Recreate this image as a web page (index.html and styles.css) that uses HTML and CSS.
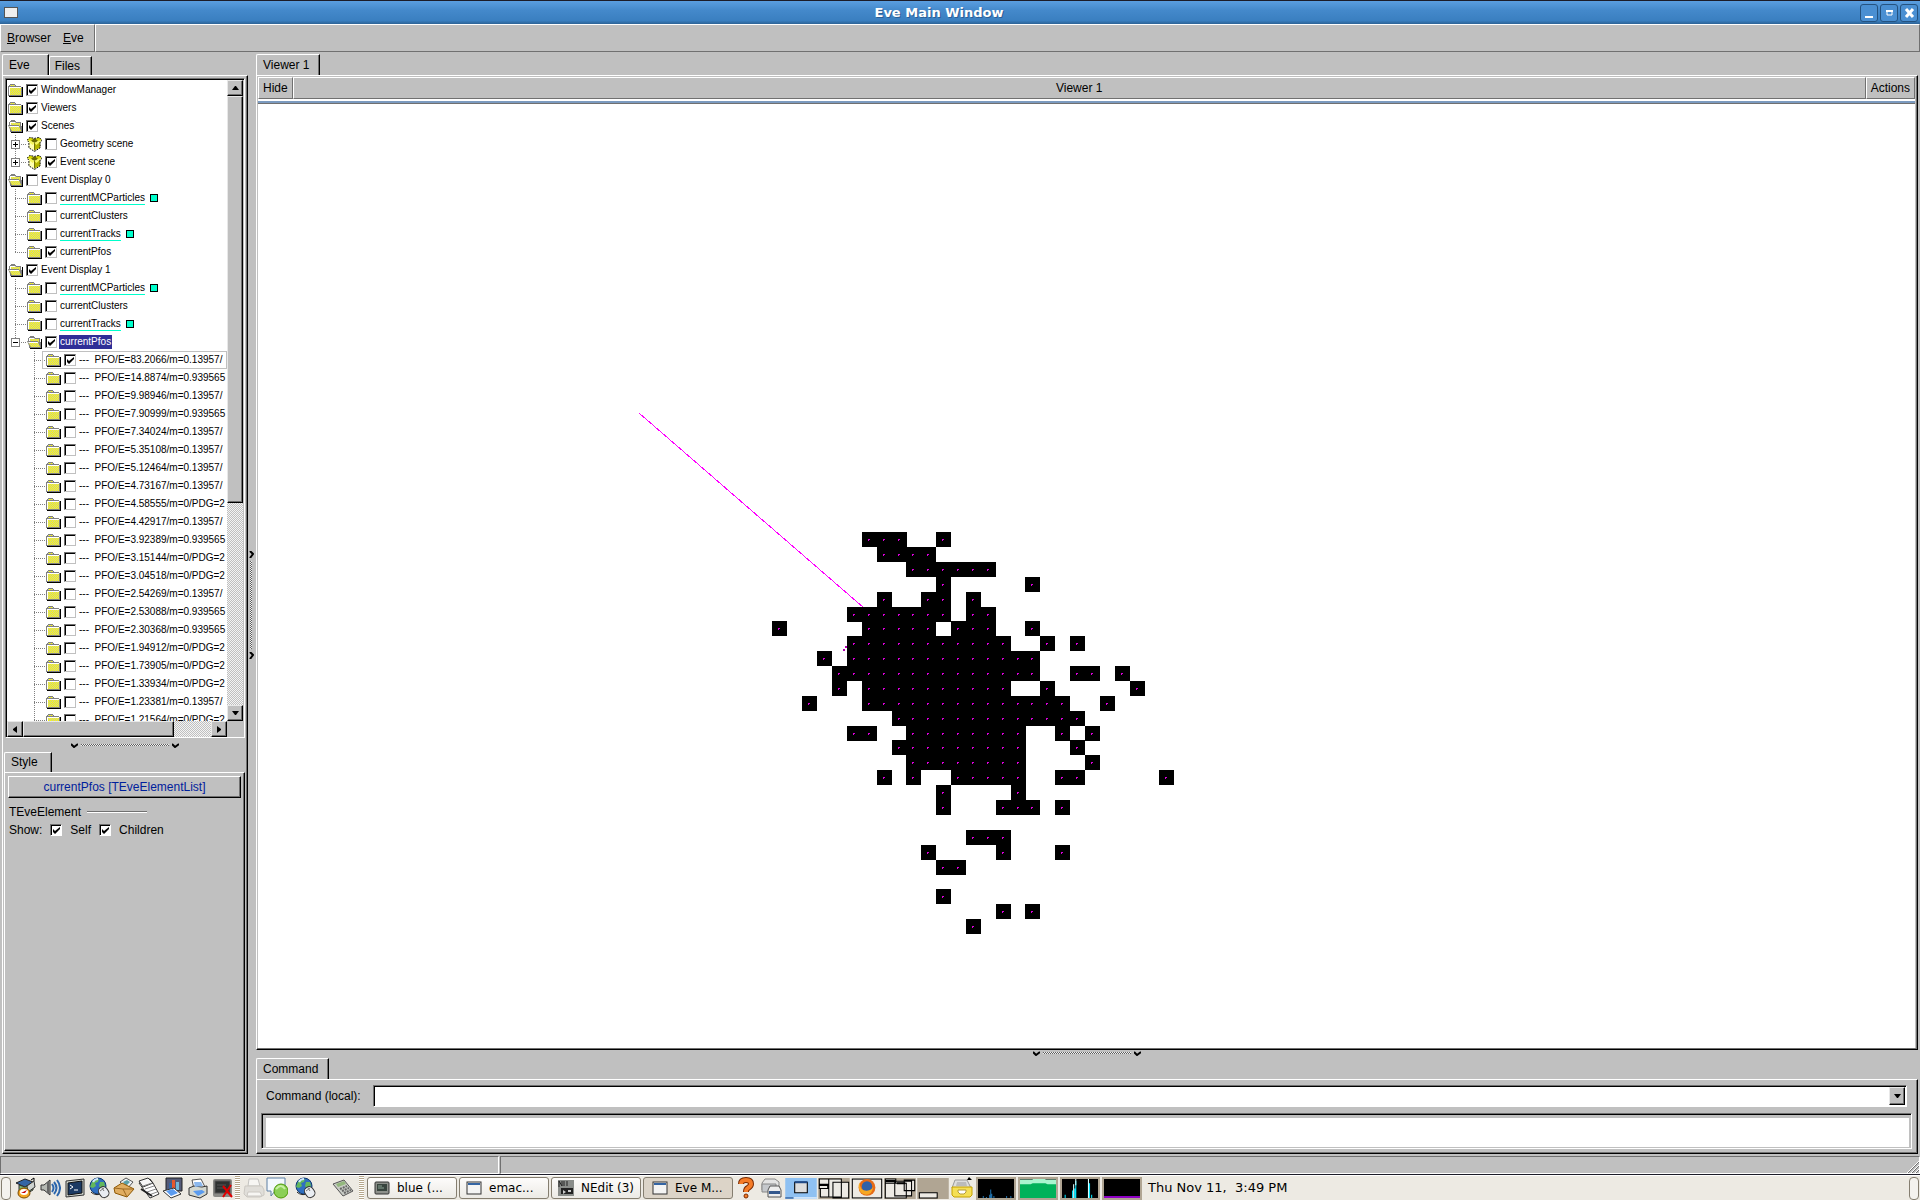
FILE: index.html
```html
<!DOCTYPE html>
<html lang="en">
<head>
  <meta charset="UTF-8">
  <meta name="viewport" content="width=device-width, initial-scale=1.0">
  <title>Eve Main Window</title>
  <link rel="stylesheet" href="styles.css">
</head>
<body>

  <!-- shared tree icons -->
  <svg class="defs" width="0" height="0" aria-hidden="true">
    <defs>
      <pattern id="dither" width="2" height="2" patternUnits="userSpaceOnUse">
        <rect width="2" height="2" fill="#ffff00"/>
        <rect width="1" height="1" fill="#c8c8a0"/>
        <rect x="1" y="1" width="1" height="1" fill="#c8c8a0"/>
      </pattern>
      <symbol id="folder" viewBox="0 0 15 14">
        <path d="M0 3h1V2h1V1h5v1h1v1h5v1h1v9H0z" fill="#808080"/>
        <path d="M1 4h12v8H1z" fill="url(#dither)"/>
        <path d="M2 2h5v1H2z" fill="url(#dither)"/>
        <path d="M1 4h12v1H2v7H1z" fill="#fff"/>
        <path d="M14 4h1v10H1v-1h13z" fill="#000"/>
      </symbol>
      <symbol id="folder-open" viewBox="0 0 15 14">
        <path d="M1 3h1V2h1V1h4v1h1v1h5v4h1v6H2V7H1z" fill="#808080"/>
        <path d="M2 3h5l1 1h4v3H2z" fill="#fff"/>
        <path d="M3 4h9v3H3z" fill="url(#dither)"/>
        <path d="M0 6h11l3 7H3z" fill="#808080"/>
        <path d="M1 7h10l2 5H4z" fill="url(#dither)"/>
        <path d="M1 7h10v1H2z" fill="#fff"/>
        <path d="M14 4h1v10H3v-1h11z" fill="#000"/>
      </symbol>
      <symbol id="box" viewBox="0 0 16 16">
        <path d="M2 5l6 2v8l-6-3z" fill="#ffffb0"/>
        <path d="M8 7l6-2v7l-6 3z" fill="#b4b400"/>
        <path d="M2 4l6-2 6 2-6 3z" fill="#6b6b00"/>
        <path d="M0 4l3-3 4 1-3 3zM16 4l-3-3-4 1 3 3z" fill="#d8d800"/>
        <path d="M1 5l2-1 5 3-2 2zM15 5l-2-1-5 3 2 2z" fill="#f4f460"/>
        <path d="M0 4l3-3 5 1 5-1 3 3-2 2v6l-6 4-6-4V6z" fill="none" stroke="#000" stroke-dasharray="2 1"/>
        <path d="M8 7v8" stroke="#6b6b00"/>
      </symbol>
      <symbol id="globe" viewBox="0 0 22 22">
        <circle cx="10" cy="9" r="8" fill="#2f6fc0" stroke="#123a70"/>
        <path d="M4 5c2-3 5-3 7-3l-1 3-3 1 1 3-3 2-3-1zM12 5l4 0 1 4-4 3-2-3z" fill="#62b85c"/>
        <path d="M5 5c1-2 3-3 5-3" stroke="#cfe6ff" stroke-width="2" fill="none"/>
        <path d="M3 15c3 3 7 3 9 2" stroke="#222" fill="none"/>
        <rect x="11" y="10" width="9" height="11" rx="4" transform="rotate(-35 15 15)" fill="#e9edf2" stroke="#333"/>
        <path d="M12 14l4-3M14 11l2 3" stroke="#777"/>
      </symbol>
      <symbol id="window" viewBox="0 0 16 14">
        <rect x="1" y="1" width="14" height="12" fill="#f4f4f4" stroke="#333"/>
        <rect x="2" y="2" width="12" height="2" fill="#3465a4"/>
      </symbol>
    </defs>
  </svg>

  <div class="desktop">

    <header class="titlebar">
      <span class="window-icon"></span>
      <h1>Eve Main Window</h1>
      <div class="window-buttons">
        <button aria-label="Minimize"><svg width="16" height="16"><path d="M4 11h8v2H4z" fill="#fff"/></svg></button>
        <button aria-label="Maximize"><svg width="16" height="16"><path d="M6 6h5v4H6z" fill="none" stroke="#fff"/><path d="M5 5h7v2H5z" fill="#fff"/></svg></button>
        <button aria-label="Close"><svg width="16" height="16"><path d="M5 4l7 8M12 4l-7 8" stroke="#fff" stroke-width="3"/></svg></button>
      </div>
    </header>

    <nav class="menubar">
      <div class="menus">
        <button><u>B</u>rowser</button>
        <button><u>E</u>ve</button>
      </div>
      <div class="menu-rest"></div>
    </nav>

    <main class="workspace">

      <section class="sidebar">
        <div class="tabs">
          <button class="tab active">Eve</button>
          <button class="tab">Files</button>
        </div>
        <div class="side-body raised">
          <div class="tree-frame sunken">
            <ul class="tree" id="tree"></ul>
            <div class="scroll-v">
              <button class="scroll-btn" aria-label="Scroll up"><svg width="7" height="4"><path d="M0 4h7L4 0H3z"/></svg></button>
              <div class="thumb"></div>
              <div class="trough"></div>
              <button class="scroll-btn" aria-label="Scroll down"><svg width="7" height="4"><path d="M0 0h7L4 4H3z"/></svg></button>
            </div>
            <div class="scroll-h">
              <button class="scroll-btn" aria-label="Scroll left"><svg width="4" height="7"><path d="M4 0v7L0 4V3z"/></svg></button>
              <div class="thumb"></div>
              <div class="trough"></div>
              <button class="scroll-btn" aria-label="Scroll right"><svg width="4" height="7"><path d="M0 0v7l4-3V3z"/></svg></button>
            </div>
          </div>

          <div class="splitter"><svg width="7" height="5"><path d="M0 1l3 3 4-3"/></svg><i></i><svg width="7" height="5"><path d="M0 1l3 3 4-3"/></svg></div>

          <div class="style-pane">
            <div class="tabs">
              <button class="tab active">Style</button>
            </div>
            <div class="style-body raised">
              <button class="object-btn raised">currentPfos [TEveElementList]</button>
              <div class="group-title">TEveElement <hr></div>
              <div class="show-row">
                <span>Show:</span>
                <label><input type="checkbox" checked>Self</label>
                <label><input type="checkbox" checked>Children</label>
              </div>
            </div>
          </div>
        </div>
      </section>

      <div class="splitter vertical"><svg width="5" height="7"><path d="M1 0l3 3-3 4"/></svg><i></i><svg width="5" height="7"><path d="M1 0l3 3-3 4"/></svg></div>

      <section class="content">
        <div class="tabs">
          <button class="tab active">Viewer 1</button>
        </div>
        <div class="viewer raised">
          <div class="viewer-bar">
            <button>Hide</button>
            <button class="viewer-title">Viewer 1</button>
            <button>Actions</button>
          </div>
          <div class="viewer-stripe"></div>
          <svg class="canvas" id="canvas" role="img" aria-label="Event display"></svg>
        </div>

        <div class="splitter"><svg width="7" height="5"><path d="M0 1l3 3 4-3"/></svg><i></i><svg width="7" height="5"><path d="M0 1l3 3 4-3"/></svg></div>

        <div class="tabs">
          <button class="tab active">Command</button>
        </div>
        <div class="command raised">
          <div class="command-row">
            <label for="command">Command (local):</label>
            <div class="combo sunken">
              <input type="text" id="command">
              <button class="scroll-btn" aria-label="Command history"><svg width="7" height="4"><path d="M0 0h7L4 4H3z"/></svg></button>
            </div>
          </div>
          <div class="output sunken"><textarea aria-label="Command output" readonly></textarea></div>
        </div>
      </section>
    </main>

    <div class="statusbar">
      <div></div>
      <div>
        <svg width="12" height="12"><path d="M0 12L12 0M4 12l8-8M8 12l4-4" stroke="#fff"/><path d="M1 12L12 1M5 12l7-7M9 12l3-3" stroke="#707070"/></svg>
      </div>
    </div>

    <footer class="taskbar">
      <button class="hide-btn" aria-label="Hide panel"></button>
      <div class="launchers">
        <svg class="icon" viewBox="0 0 22 22">
          <path d="M2 6l9-4 8 3-8 5z" fill="#3465a4" stroke="#222"/><path d="M5 8l6 2 8-4v7l-7 4-7-3z" fill="#7fb56c" stroke="#333"/><path d="M13 9l7-5 1 6-7 5z" fill="#cfd3d0" stroke="#333"/><path d="M17 3l3-2v3" fill="none" stroke="#000"/>
          <ellipse cx="10" cy="16" rx="6" ry="5" fill="#f5a623" stroke="#7a4a00"/><ellipse cx="10" cy="15" rx="4" ry="3" fill="#fff"/><path d="M7 16l6-3-2 3z" fill="#c00"/>
        </svg>
        <svg class="icon" viewBox="0 0 22 22">
          <path d="M2 8h3l6-5v15l-6-5H2z" fill="#b5b8b2" stroke="#333"/><path d="M9 5v11" stroke="#666" stroke-width="2"/>
          <path d="M13 7q3 4 0 8M15 5q5 6 0 12M18 3q6 8 0 16" fill="none" stroke="#2c66ad" stroke-width="2"/>
        </svg>
        <svg class="icon" viewBox="0 0 22 22">
          <path d="M2 4l18-2v16L2 20z" fill="#d3d7cf" stroke="#333"/><path d="M4 6l14-2v12L4 18z" fill="#1c3a63" stroke="#111"/><path d="M6 8l3 2-3 2M10 13h4" fill="none" stroke="#fff"/>
        </svg>
        <svg class="icon" viewBox="0 0 22 22"><use href="#globe"/></svg>
        <svg class="icon" viewBox="0 0 22 22">
          <path d="M7 5l6-4 7 4-6 7z" fill="#eef3f7" stroke="#555"/><path d="M10 5l4-2 3 2-4 4z" fill="#5ba0a8"/><path d="M1 11l8-5 12 6-7 8-12-4z" fill="#e0ad60" stroke="#8f5902"/><path d="M1 11l9 1 11 0M10 12l4 8" fill="none" stroke="#9c6820"/>
        </svg>
        <svg class="icon" viewBox="0 0 22 22">
          <path d="M1 6l11-4 3 4 6 11-9 4z" fill="#fff" stroke="#333"/><path d="M1 4l9-3 5 5-10 4z" fill="#f7f7f7" stroke="#333"/><path d="M5 9l9-3M7 12l9-3M9 15l9-3M11 18l8-3" stroke="#888"/><path d="M3 12l11 7" stroke="#222" stroke-width="2"/>
        </svg>
        <svg class="icon" viewBox="0 0 22 22">
          <path d="M4 1h16v13H4z" fill="#555b78" stroke="#222"/><path d="M7 6h3v7H7z" fill="#3465a4"/><path d="M10 3h3v10h-3z" fill="#e8582c"/><path d="M14 5h3v8h-3z" fill="#73b6d8"/><path d="M1 14l11-3 7 6-10 4z" fill="#fff" stroke="#333"/><path d="M4 14l7-2 5 4-7 3z" fill="#5a9bef"/>
        </svg>
        <svg class="icon" viewBox="0 0 22 22">
          <path d="M5 3l9-1 4 8-11 2z" fill="#fff" stroke="#555"/><path d="M2 11l5-2 8 1 5-1v8l-7 4-11-3z" fill="#d3d7cf" stroke="#333"/><path d="M6 14l9-1 3 2-7 4z" fill="#5a9bef"/><path d="M7 5l7 0 2 4-8 1z" fill="#8bb8ee"/>
        </svg>
        <svg class="icon" viewBox="0 0 22 22">
          <rect x="1" y="2" width="19" height="18" rx="2" fill="#8a8a86"/><rect x="3" y="4" width="15" height="12" fill="#2e3130" stroke="#555"/><path d="M5 8h9M5 11h9" stroke="#555"/><path d="M11 9l9 11M19 8l-8 12" stroke="#e00000" stroke-width="2"/>
        </svg>
      </div>
      <span class="grip"></span>
      <div class="applets">
        <svg class="icon" viewBox="0 0 22 22" opacity=".6">
          <path d="M6 2h9l2 7H5z" fill="#fff" stroke="#aaa"/><path d="M2 9h17l2 4v5l-4 2H4l-3-3z" fill="#d9d7d3" stroke="#b5b2ad"/><path d="M5 15h12l2 4H4z" fill="#fff" stroke="#b5b2ad"/>
        </svg>
        <svg class="icon" viewBox="0 0 22 22">
          <path d="M1 1h18v13H9l-4 5v-5H1z" fill="#f3f8fd" stroke="#5c7fa3"/><circle cx="15" cy="14" r="7" fill="#8bcf56" stroke="#4e9a06"/><path d="M10 12q5-6 9 0" fill="none" stroke="#c7efa4" stroke-width="2"/>
        </svg>
        <svg class="icon" viewBox="0 0 22 22"><use href="#globe"/></svg>
        <svg class="icon calc" viewBox="0 0 22 22">
          <path d="M1 7l11-4 9 11-10 5z" fill="#c9ccc6" stroke="#555"/><path d="M4 7l8-3 2 3-8 3z" fill="#93b77d"/><path d="M8 12l7-3M10 14l7-3M12 16l7-3" stroke="#666" stroke-width="2" stroke-dasharray="2 1"/>
        </svg>
      </div>
      <span class="grip"></span>
      <div class="tasks">
        <button class="task"><svg width="16" height="14" viewBox="0 0 16 14"><rect x="1" y="1" width="14" height="12" rx="1" fill="#8d908b" stroke="#333"/><rect x="3" y="3" width="10" height="7" fill="#38443e"/><path d="M4 5h4M4 7h6" stroke="#8aa394"/></svg>blue (...</button>
        <button class="task"><svg width="16" height="14"><use href="#window"/></svg>emac...</button>
        <button class="task"><svg width="16" height="16" viewBox="0 0 16 16"><rect width="16" height="16" fill="#8a8d8a"/><path d="M1 7V1l3 5V1M6 1v5M9 1v5" fill="none" stroke="#222"/><path d="M3 8h12v6H3z" fill="#222"/><path d="M5 10l3 2-3 2M10 10h3v2h-3z" fill="#ccc"/></svg>NEdit (3)</button>
        <button class="task pressed"><svg width="16" height="14"><use href="#window"/></svg>Eve M...</button>
      </div>
      <svg class="icon" viewBox="0 0 22 22"><path d="M6 7q0-4 5-4t5 4q0 2-3 4-2 1-2 4" fill="none" stroke="#7a2a00" stroke-width="6"/><path d="M6 7q0-4 5-4t5 4q0 2-3 4-2 1-2 4" fill="none" stroke="#f57c28" stroke-width="4"/><circle cx="11" cy="19" r="2" fill="#f57c28" stroke="#7a2a00"/></svg>
      <svg class="icon" viewBox="0 0 22 22"><path d="M5 2h10l4 3v8H2V6z" fill="#e4e4e4" stroke="#888"/><path d="M2 7h14v8H2z" fill="#c5c8cc" stroke="#888"/><path d="M10 9h9l2 4v7H8v-7z" fill="#eee" stroke="#555"/><path d="M9 14h11v3H9z" fill="#34588c"/></svg>
      <div class="pager">
        <svg viewBox="0 0 30 20"><rect width="30" height="20" fill="#8fc1f2"/><path d="M9 4h12v10H9z" fill="#ddd" stroke="#000"/><path d="M9 4h12" stroke="#204a87" stroke-width="2"/><path d="M0 19h8" stroke="#204a87"/><path d="M8 19h22" stroke="#fff"/></svg>
        <svg viewBox="0 0 30 20"><rect width="30" height="20" fill="#b0a593"/><g fill="#edeae4" stroke="#000"><path d="M1 1h9v5H1zM1 7h8v3H1zM2 10h8v8H2zM10 1h12v17H10zM14 4h15v15H14z"/></g></svg>
        <svg viewBox="0 0 30 20"><rect x="1" y="1" width="28" height="18" fill="#edeae4" stroke="#000"/><circle cx="15" cy="9" r="8" fill="#e66b17"/><circle cx="15" cy="8" r="5" fill="#3061a8"/><path d="M8 4q0 9 8 8 4-1 5-4-1 8-7 8-7-1-7-9z" fill="#f7a823"/></svg>
        <svg viewBox="0 0 30 20"><rect width="30" height="20" fill="#b0a593"/><g fill="#edeae4" stroke="#000"><path d="M1 1h10v4H1zM19 2h10v10H19zM10 3h16v14H10zM1 5h20v14H1z"/></g><path d="M1 3h10M12 5h8" stroke="#000" stroke-width="2"/></svg>
        <svg viewBox="0 0 30 20"><rect width="30" height="20" fill="#b0a593"/><path d="M2 14h17v5H2z" fill="#edeae4" stroke="#000"/></svg>
      </div>
      <svg class="icon drawer" viewBox="0 0 22 22"><path d="M4 3h12l4 8H1z" fill="#ddd" stroke="#999"/><path d="M6 5h9l1 4H5z" fill="#bbb"/><path d="M1 10h20v8l-2 2H3l-2-2z" fill="#f5df55" stroke="#c4a000"/><path d="M7 13h8v2l-2 2H9l-2-2z" fill="#fff" stroke="#b39b3a"/><path d="M16 3l2-3 3 3z" fill="#000"/></svg>
      <div class="monitors">
        <svg viewBox="0 0 34 18" preserveAspectRatio="none"><rect width="34" height="18"/><path d="M5 18v-2M8 18v-1M11 18v-3M12 18v-8M13 18v-4M15 18v-2M27 18v-2M31 18v-2" stroke="#1f6ea8"/></svg>
        <svg viewBox="0 0 34 18" preserveAspectRatio="none"><rect width="34" height="18" fill="#a8f5cf"/><path d="M0 5h10l2-1h12l2 1h8v13H0z" fill="#00b25a"/><path d="M0 0h12M24 0h10" stroke="#000"/></svg>
        <svg viewBox="0 0 34 18" preserveAspectRatio="none"><rect width="34" height="18"/><path d="M3 18v-3M10 18v-7M12 18V9M13 18V2M26 18V4M28 18v-3" stroke="#00e5ff"/><path d="M11 18V5M25 18V0M13 6V0" stroke="#e0ffff"/></svg>
        <svg viewBox="0 0 34 18" preserveAspectRatio="none"><rect width="34" height="18"/><path d="M0 16h34v2H0z" fill="#8f00c4"/></svg>
      </div>
      <time class="clock">Thu Nov 11, &nbsp;3:49 PM</time>
      <button class="hide-btn end" aria-label="Hide panel"></button>
    </footer>
  </div>

  <script src="script.js"></script>
</body>
</html>
```

FILE: styles.css
```css
* {
  box-sizing: border-box;
}
html, body {
  height: 100%;
}
body {
  margin: 0;
  overflow: hidden;
  background-color: #c0c0c0;
  color: #000;
  font-family: "Liberation Sans", Arial, sans-serif;
  font-size: 12px;
  line-height: 14px;
}
button {
  margin: 0;
  padding: 0;
  border: none;
  background-color: #c0c0c0;
  color: inherit;
  font: inherit;
}
svg {
  display: block;
  flex: none;
}
.defs {
  position: absolute;
}
.desktop {
  display: flex;
  flex-direction: column;
  height: 100vh;
}

/* bevels */
.raised {
  border: 1px solid;
  border-color: #fff #000 #000 #fff;
  box-shadow: inset -1px -1px #707070;
}
.sunken {
  border: 1px solid;
  border-color: #707070 #fff #fff #707070;
  box-shadow: inset 1px 1px #000;
}

/* title bar */
.titlebar {
  display: flex;
  align-items: center;
  height: 24px;
  padding: 0 2px 0 4px;
  border-top: 1px solid #1c1c28;
  background: linear-gradient(#5a9ee0, #4489cb 40%, #3a7fc0 85%, #2d6396);
}
.titlebar h1 {
  flex: 1;
  margin: 0;
  text-align: center;
  color: #fff;
  font: bold 13px/20px "DejaVu Sans", sans-serif;
  text-shadow: 1px 1px #2c5f95;
}
.window-icon {
  width: 14px;
  height: 11px;
  border: 1px solid #555;
  background-color: #eee;
}
.window-buttons {
  display: flex;
  gap: 2px;
}
.window-buttons button {
  width: 18px;
  height: 18px;
  border: 1px solid #24527f;
  border-radius: 3px;
  background-color: #4a8fd2;
}

/* menu bar */
.menubar {
  display: flex;
  height: 28px;
}
.menus, .menu-rest {
  border: 1px solid;
  border-color: #fff #707070 #707070 #fff;
}
.menus {
  display: flex;
  gap: 12px;
  width: 95px;
  padding-left: 6px;
}
.menu-rest {
  flex: 1;
}

/* layout */
.workspace {
  display: grid;
  grid-template-columns: 246px 8px minmax(0, 1fr);
  flex: 1;
  min-height: 0;
  padding: 0 2px 2px 2px;
}
.sidebar, .content {
  display: flex;
  flex-direction: column;
  min-height: 0;
}
.tabs {
  display: flex;
  align-items: flex-end;
  flex: none;
  height: 23px;
  padding-top: 2px;
}
.tab {
  height: 19px;
  padding: 0 11px 0 5px;
  border: 1px solid;
  border-color: #fff #000 transparent #fff;
  border-bottom: none;
  border-radius: 2px 0 0 0;
  box-shadow: inset -1px 0 #707070;
}
.tab.active {
  height: 22px;
  margin-bottom: -1px;
  padding-bottom: 2px;
  padding-left: 6px;
  padding-right: 10px;
}
.sidebar > .tabs .active {
  padding-right: 18px;
}

/* sidebar */
.side-body {
  display: grid;
  grid-template-rows: minmax(0, 660fr) 14px minmax(0, 399fr);
  flex: 1;
  min-height: 0;
  padding: 2px 2px 2px 1px;
}
.tree-frame {
  display: grid;
  grid-template-columns: minmax(0, 1fr) 16px;
  grid-template-rows: minmax(0, 1fr) 16px;
  margin-left: 1px;
  padding: 1px 1px 0 1px;
}
.tree {
  margin: 0;
  padding: 1px 0 0 0;
  overflow: hidden;
  list-style: none;
  background-color: #fff;
  font-size: 10px;
}
.tree li {
  display: flex;
  align-items: center;
  height: 18px;
  padding-left: 1px;
  white-space: nowrap;
}
.tree label {
  display: flex;
  align-items: center;
  gap: 3px;
  margin-left: 3px;
}
.guide {
  display: flex;
  flex: none;
  align-items: center;
  width: 19px;
  height: 18px;
  padding-left: 3px;
}
.guide.line, .guide.end {
  background:
    repeating-linear-gradient(90deg, #808080 0 1px, transparent 1px 2px) 7px 9px / 11px 1px no-repeat,
    repeating-linear-gradient(#808080 0 1px, transparent 1px 2px) 7px 0 / 1px 18px no-repeat;
}
.guide.end {
  background-size: 11px 1px, 1px 9px;
}
.expander {
  width: 9px;
  height: 9px;
  border: 1px solid #808080;
  background:
    linear-gradient(#000, #000) center / 5px 1px no-repeat,
    linear-gradient(#000, #000) center / 1px 5px no-repeat,
    #fff;
}
.expander.open {
  background: linear-gradient(#000, #000) center / 5px 1px no-repeat #fff;
}
.linked {
  border-bottom: 1px solid #00ffcc;
  line-height: 13px;
}
.swatch {
  width: 8px;
  height: 8px;
  margin-left: 5px;
  border: 1px solid #000;
  background-color: #00ffcc;
}
.selected {
  margin-left: -1px;
  padding: 0 1px;
  background-color: #2f2f97;
  color: #fff;
}
.focus {
  flex: 1;
  display: flex;
  align-items: center;
  min-width: 0;
  height: 18px;
  margin-left: -4px;
  padding-left: 3px;
  border: 1px solid #c0c0c0;
}
input[type="checkbox"] {
  appearance: none;
  flex: none;
  width: 12px;
  height: 12px;
  margin: 0;
  border: 1px solid;
  border-color: #707070 #c0c0c0 #c0c0c0 #707070;
  background-color: #fff;
  box-shadow: inset 1px 1px #000;
}
input[type="checkbox"]:checked {
  background-image: url("data:image/svg+xml,%3Csvg xmlns='http://www.w3.org/2000/svg' width='10' height='10'%3E%3Cpath d='M2 4v3l2 2 5-5V2L4 6z'/%3E%3C/svg%3E");
}

/* scroll bars */
.scroll-v, .scroll-h {
  display: flex;
}
.scroll-v {
  flex-direction: column;
}
.scroll-btn, .thumb {
  border: 1px solid;
  border-color: #e8e8e8 #000 #000 #e8e8e8;
  box-shadow: inset -1px -1px #707070;
  background-color: #c0c0c0;
}
.scroll-btn {
  display: flex;
  flex: none;
  align-items: center;
  justify-content: center;
  width: 16px;
  height: 16px;
}
.trough {
  flex: 1;
  background: repeating-conic-gradient(#c0c0c0 0 25%, #f4f4f4 0 50%) 0 0 / 2px 2px;
}
.scroll-v .thumb {
  flex: 2;
}
.scroll-h .thumb {
  flex: 4;
}

/* splitters */
.splitter {
  display: flex;
  flex: none;
  align-items: center;
  justify-content: center;
  gap: 3px;
}
.splitter svg {
  fill: none;
  stroke: #000;
  stroke-width: 2px;
}
.splitter i {
  width: 88px;
  height: 2px;
  background: repeating-conic-gradient(#f0f0f0 0 25%, #606060 0 50%) 0 0 / 2px 2px;
}
.splitter.vertical {
  flex-direction: column;
  padding: 4px 2px 0 0;
}
.splitter.vertical i {
  width: 2px;
  height: 88px;
}

/* style editor */
.style-pane {
  display: flex;
  flex-direction: column;
  min-height: 0;
}
.style-pane .tabs {
  height: 20px;
  padding-top: 0;
}
.style-pane .tab.active {
  height: 21px;
  padding-right: 13px;
}
.style-body {
  display: flex;
  flex: 1;
  flex-direction: column;
  padding: 3px;
}
.object-btn {
  height: 22px;
  color: #00209c;
}
.group-title {
  display: flex;
  align-items: center;
  gap: 6px;
  margin-top: 7px;
  padding-left: 1px;
}
.group-title hr {
  width: 60px;
  height: 2px;
  margin: 0;
  border: none;
  border-top: 1px solid #707070;
  border-bottom: 1px solid #fff;
}
.show-row {
  display: flex;
  gap: 8px;
  margin-top: 4px;
  padding-left: 1px;
}
.show-row label {
  display: flex;
  align-items: center;
  gap: 8px;
}
.show-row input[type="checkbox"] {
  border-right-color: #fff;
  border-bottom-color: #fff;
}

/* viewer */
.viewer {
  display: flex;
  flex: 1;
  flex-direction: column;
  min-height: 0;
  padding: 1px 2px 1px 1px;
}
.viewer-bar {
  display: flex;
  height: 22px;
}
.viewer-bar button {
  padding: 0 4px;
  border: 1px solid;
  border-color: #fff #707070 #707070 #fff;
}
.viewer-bar .viewer-title {
  flex: 1;
}
.viewer-stripe {
  flex: none;
  height: 5px;
  border-top: 2px solid #fff;
  border-bottom: 1px solid #707070;
  background-color: #7b9abf;
}
.canvas {
  display: block;
  flex: 1;
  width: 100%;
  min-height: 0;
  background-color: #fff;
}
.content > .splitter {
  height: 8px;
  padding-bottom: 2px;
}
.content > .splitter ~ .tabs {
  height: 21px;
  padding-top: 0;
}

/* command line */
.command {
  display: flex;
  flex: none;
  flex-direction: column;
  gap: 6px;
  height: 75px;
  padding: 5px 5px 4px 4px;
}
.command-row {
  display: flex;
  align-items: center;
  gap: 12px;
  padding: 0 5px 0 5px;
}
.combo {
  display: flex;
  flex: 1;
  height: 22px;
  padding: 1px 1px 1px 1px;
  background-color: #fff;
}
.combo input {
  flex: 1;
  min-width: 0;
  padding: 0 2px;
  border: none;
  background: transparent;
  font: inherit;
}
.combo .scroll-btn {
  height: 18px;
}
.output {
  flex: 1;
  padding: 4px 2px 1px 4px;
}
.output textarea {
  display: block;
  width: 100%;
  height: 100%;
  padding: 0;
  border: none;
  resize: none;
  font: inherit;
}

/* status bar */
.statusbar {
  display: grid;
  grid-template-columns: 26% minmax(0, 1fr);
  gap: 1px;
  flex: none;
  height: 19px;
  border-bottom: 1px solid #1c1c28;
}
.statusbar div {
  display: flex;
  align-items: flex-end;
  justify-content: flex-end;
  border: 1px solid;
  border-color: #707070 #fff #fff #707070;
}

/* desktop panel */
.taskbar {
  display: flex;
  flex: none;
  align-items: center;
  height: 25px;
  padding: 0 1px;
  border-top: 1px solid #fff;
  background-color: #edeae3;
  font-family: "DejaVu Sans", sans-serif;
  font-size: 13px;
}
.icon {
  width: 22px;
  height: 22px;
}
.hide-btn {
  width: 10px;
  height: 23px;
  border: 1px solid #857e70;
  border-radius: 4px;
  background-color: #f4f2ee;
}
.launchers {
  display: grid;
  grid-template-columns: repeat(9, 1fr);
  justify-items: center;
  width: 222px;
  margin-left: 2px;
}
.grip {
  width: 5px;
  height: 24px;
  background: repeating-linear-gradient(#b5a78c 0 1px, #fff 1px 2px);
}
.applets {
  display: flex;
  gap: 1px;
  width: 119px;
  padding-left: 3px;
}
.applets .icon:nth-child(3) {
  margin-left: 5px;
}
.applets .calc {
  margin: 0 5px 0 auto;
}
.tasks {
  display: flex;
  gap: 2px;
  margin: 0 2px 0 3px;
}
.task {
  display: flex;
  align-items: center;
  gap: 7px;
  width: 90px;
  height: 22px;
  padding-left: 6px;
  overflow: hidden;
  border: 1px solid #857e70;
  border-radius: 3px;
  background: linear-gradient(#fdfcfb, #eceae5);
  font-size: 12px;
  white-space: nowrap;
}
.task.pressed {
  padding-left: 8px;
  background: #dcd4c8;
}
.taskbar > .icon {
  margin-right: 3px;
}
.pager, .monitors {
  display: flex;
  gap: 1px;
}
.pager svg {
  width: 32px;
  height: 21px;
}
.taskbar > .drawer {
  margin-left: 2px;
}
.monitors {
  gap: 2px;
}
.monitors svg {
  width: 40px;
  height: 23px;
  border: 2px solid #b0a593;
}
.clock {
  margin-left: 6px;
  white-space: pre;
}
.hide-btn.end {
  margin-left: auto;
}
```

FILE: script.js
```javascript
// level, icon, checked, label, options
const items = [
  [0, 'folder', true, 'WindowManager'],
  [0, 'folder', true, 'Viewers'],
  [0, 'folder-open', true, 'Scenes'],
  [1, 'box', false, 'Geometry scene', { expander: 'closed' }],
  [1, 'box', true, 'Event scene', { expander: 'closed', last: true }],
  [0, 'folder-open', false, 'Event Display 0'],
  [1, 'folder', false, 'currentMCParticles', { linked: true }],
  [1, 'folder', false, 'currentClusters'],
  [1, 'folder', false, 'currentTracks', { linked: true }],
  [1, 'folder', true, 'currentPfos', { last: true }],
  [0, 'folder-open', true, 'Event Display 1'],
  [1, 'folder', false, 'currentMCParticles', { linked: true }],
  [1, 'folder', false, 'currentClusters'],
  [1, 'folder', false, 'currentTracks', { linked: true }],
  [1, 'folder-open', true, 'currentPfos', { expander: 'open', last: true, selected: true }]
];

const pfos = [
  'E=83.2066/m=0.13957/', 'E=14.8874/m=0.939565', 'E=9.98946/m=0.13957/', 'E=7.90999/m=0.939565',
  'E=7.34024/m=0.13957/', 'E=5.35108/m=0.13957/', 'E=5.12464/m=0.13957/', 'E=4.73167/m=0.13957/',
  'E=4.58555/m=0/PDG=2', 'E=4.42917/m=0.13957/', 'E=3.92389/m=0.939565', 'E=3.15144/m=0/PDG=2',
  'E=3.04518/m=0/PDG=2', 'E=2.54269/m=0.13957/', 'E=2.53088/m=0.939565', 'E=2.30368/m=0.939565',
  'E=1.94912/m=0/PDG=2', 'E=1.73905/m=0/PDG=2', 'E=1.33934/m=0/PDG=2', 'E=1.23381/m=0.13957/',
  'E=1.21564/m=0/PDG=2'
];
pfos.forEach((p, i) => items.push([2, 'folder', i === 0, '---  PFO/' + p, { focus: i === 0 }]));

function row([level, icon, checked, label, opt = {}]) {
  let guides = '';
  if (level === 2) guides += '<span class="guide"></span>';
  if (level > 0) {
    const exp = opt.expander ? `<span class="expander ${opt.expander}"></span>` : '';
    guides += `<span class="guide ${opt.last ? 'end' : 'line'}">${exp}</span>`;
  }
  const h = icon === 'box' ? 16 : 14;
  const cls = opt.linked ? 'linked' : opt.selected ? 'selected' : '';
  let body = `<svg width="15" height="${h}"><use href="#${icon}"/></svg>
    <label><input type="checkbox" ${checked ? 'checked' : ''}><span class="${cls}">${label.replace('  ', ' &nbsp;')}</span></label>`;
  if (opt.linked) body += '<span class="swatch"></span>';
  if (opt.focus) body = `<div class="focus">${body}</div>`;
  return `<li>${guides}${body}</li>`;
}
document.getElementById('tree').innerHTML = items.map(row).join('');

// calorimeter hits: row number, then columns (single or [from, to])
const hits = [
  [0, [6, 8], 11], [1, [7, 10]], [2, [9, 14]], [3, 11, 17], [4, 7, 10, 11, 13],
  [5, [5, 11], 13, 14], [6, 0, [6, 10], [12, 14], 17], [7, [5, 15], 18, 20],
  [8, 3, [5, 17]], [9, [4, 17], 20, 21, 23], [10, 4, [6, 15], 18, 24],
  [11, 2, [6, 19], 22], [12, [8, 20]], [13, 5, 6, [9, 16], 19, 21],
  [14, [8, 16], 20], [15, [9, 16], 21], [16, 7, 9, [12, 16], 19, 20, 26],
  [17, 11, 16], [18, 11, [15, 17], 19], [20, [13, 15]], [21, 10, 15, 19],
  [22, 11, 12], [24, 11], [25, 15, 17], [26, 13]
];
const pitch = 14.88;
let cells = '';
let dots = '';
hits.forEach(([r, ...cols]) => {
  const y = Math.floor(428.65 + pitch * r);
  cols.forEach(c => {
    const [from, to] = Array.isArray(c) ? c : [c, c];
    for (let i = from; i <= to; i++) {
      const x = Math.floor(514.97 + pitch * i);
      cells += `M${x} ${y}h15v15h-15z`;
      dots += `M${x + 6} ${y + 7}h2v1h-1v1h-1z`;
    }
  });
});
document.getElementById('canvas').innerHTML = `
  <path d="M381 309L606 504" stroke="#f0f" shape-rendering="crispEdges"/>
  <path d="M587 542h2v2h-2zM585 545h2v2h-2z" fill="#b000b0"/>
  <path d="${cells}" shape-rendering="crispEdges"/>
  <path d="${dots}" fill="#d800d8" shape-rendering="crispEdges"/>`;
```
